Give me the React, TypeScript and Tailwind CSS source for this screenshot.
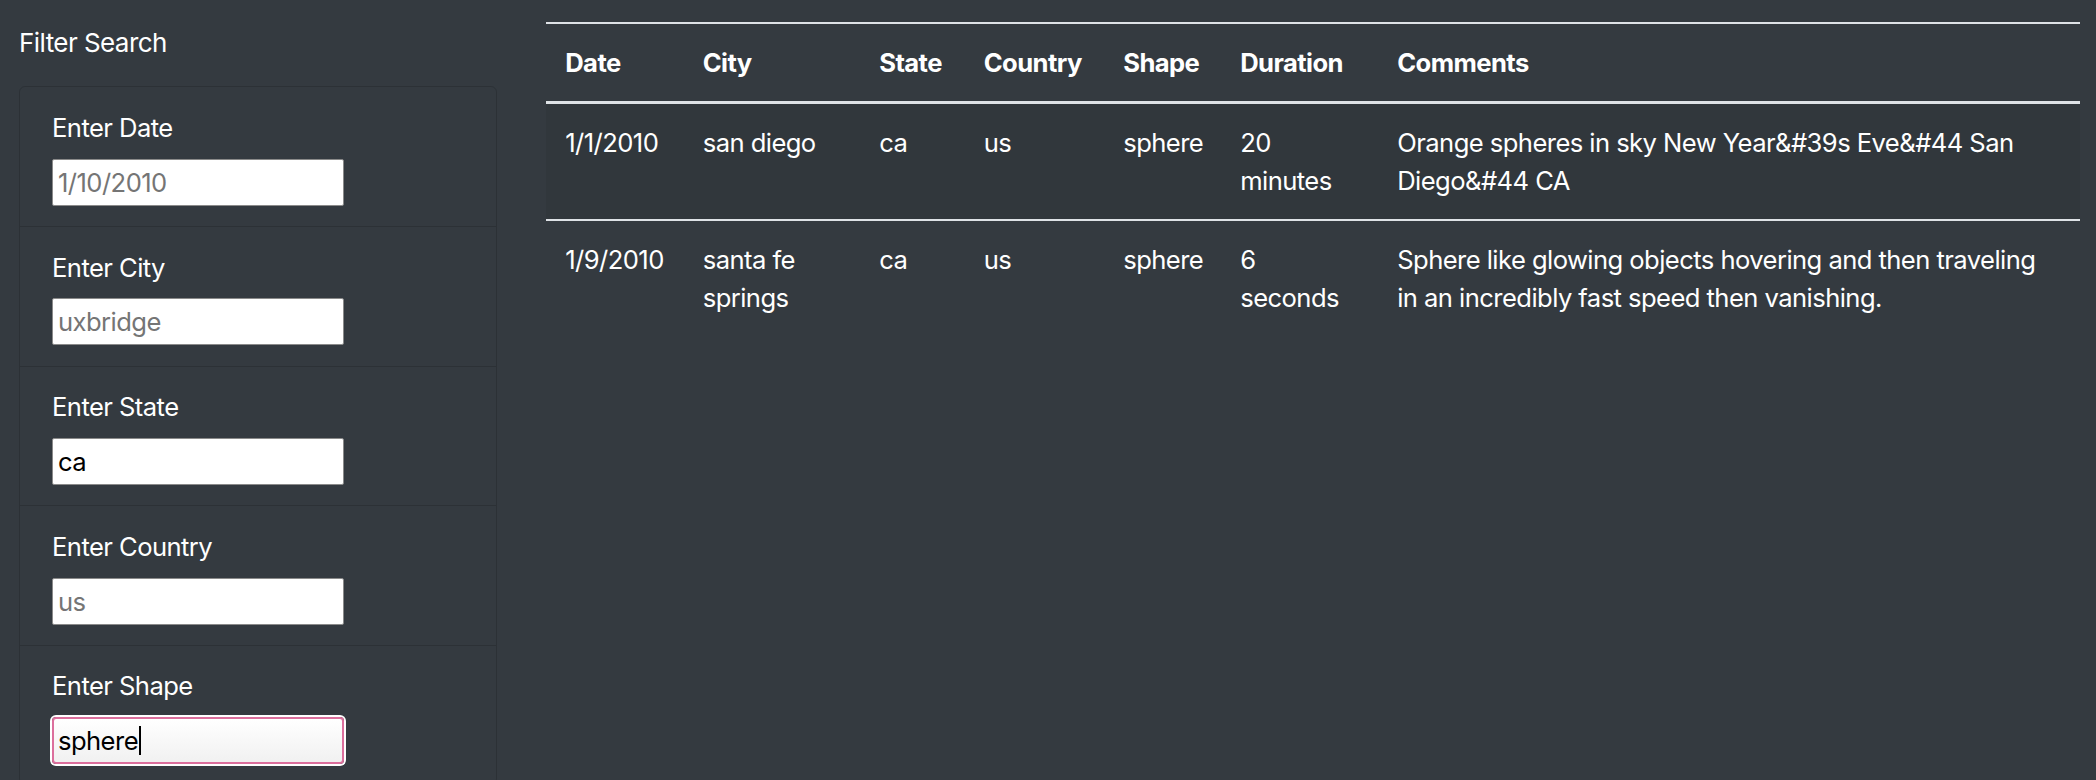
const filters = [
  { label: 'Enter Date', placeholder: '1/10/2010', value: '' },
  { label: 'Enter City', placeholder: 'uxbridge', value: '' },
  { label: 'Enter State', placeholder: '', value: 'ca' },
  { label: 'Enter Country', placeholder: 'us', value: '' },
]

const rows = [
  {
    date: '1/1/2010',
    city: 'san diego',
    state: 'ca',
    country: 'us',
    shape: 'sphere',
    duration: '20 minutes',
    comments: 'Orange spheres in sky New Year&#39s Eve&#44 San Diego&#44 CA',
  },
  {
    date: '1/9/2010',
    city: 'santa fe springs',
    state: 'ca',
    country: 'us',
    shape: 'sphere',
    duration: '6 seconds',
    comments: 'Sphere like glowing objects hovering and then traveling in an incredibly fast speed then vanishing.',
  },
]

const headers = ['Date', 'City', 'State', 'Country', 'Shape', 'Duration', 'Comments']

export default function App() {
  return (
    <div className="flex min-h-screen bg-[#343a40] font-['Inter',sans-serif] text-[25.6px] leading-[38.4px] tracking-[-0.022em] text-white">
      {/* Sidebar filters */}
      <aside className="w-[497px] shrink-0 pl-[19px] pt-[24px]">
        <h5 className="text-[26px] leading-[38.4px] font-normal">Filter Search</h5>
        <ul className="mt-[24px] rounded-[6px] border-[1.6px] border-black/15">
          {filters.map((f) => (
            <FilterItem key={f.label} {...f} />
          ))}
          <li className="px-[32px] pt-[21.7px] pb-[20.1px]">
            <label className="block">Enter Shape</label>
            <div className="mt-[11.4px] flex h-[47px] w-[292px] items-center rounded-[4px] border-2 border-[#dc6f9d] bg-linear-to-b from-white to-[#f1f1f1] pl-[4px] text-black shadow-[0_0_0_2px_#ffffff]">
              <span>sphere</span>
              <span className="ml-[1px] inline-block h-[29px] w-[2px] bg-black" />
            </div>
          </li>
        </ul>
      </aside>

      {/* Results table */}
      <main className="ml-[49px] w-[1534px] pt-[22px]">
        <table className="w-full table-fixed border-collapse text-left">
          <colgroup>
            <col className="w-[137.5px]" />
            <col className="w-[176.5px]" />
            <col className="w-[104.5px]" />
            <col className="w-[139.5px]" />
            <col className="w-[117px]" />
            <col className="w-[157px]" />
            <col />
          </colgroup>
          <thead>
            <tr>
              {headers.map((h) => (
                <th
                  key={h}
                  className="border-t-2 border-b-[3px] border-[#dee2e6] px-[19.2px] pt-[20px] pb-[18.4px] align-bottom font-bold"
                >
                  {h}
                </th>
              ))}
            </tr>
          </thead>
          <tbody>
            {rows.map((r, i) => (
              <tr key={r.date} className={i % 2 === 0 ? 'bg-black/5' : ''}>
                {[r.date, r.city, r.state, r.country, r.shape, r.duration, r.comments].map((c, j) => (
                  <td
                    key={j}
                    className={`px-[19.2px] pt-[20px] pb-[18.4px] align-top ${i === 0 ? 'border-b-2 border-[#dee2e6]' : ''}`}
                  >
                    {c}
                  </td>
                ))}
              </tr>
            ))}
          </tbody>
        </table>
      </main>
    </div>
  )
}

function FilterItem({ label, placeholder, value }: { label: string; placeholder: string; value: string }) {
  return (
    <li className="border-b-[1.6px] border-black/15 px-[32px] pt-[21.7px] pb-[20.1px]">
      <label className="block">{label}</label>
      <input
        type="text"
        placeholder={placeholder}
        defaultValue={value}
        className="mt-[11.4px] block h-[47px] w-[292px] rounded-[2px] border border-[#8a8a8a] bg-white px-[5px] tracking-[-0.022em] text-black placeholder:text-[#757575]"
      />
    </li>
  )
}
